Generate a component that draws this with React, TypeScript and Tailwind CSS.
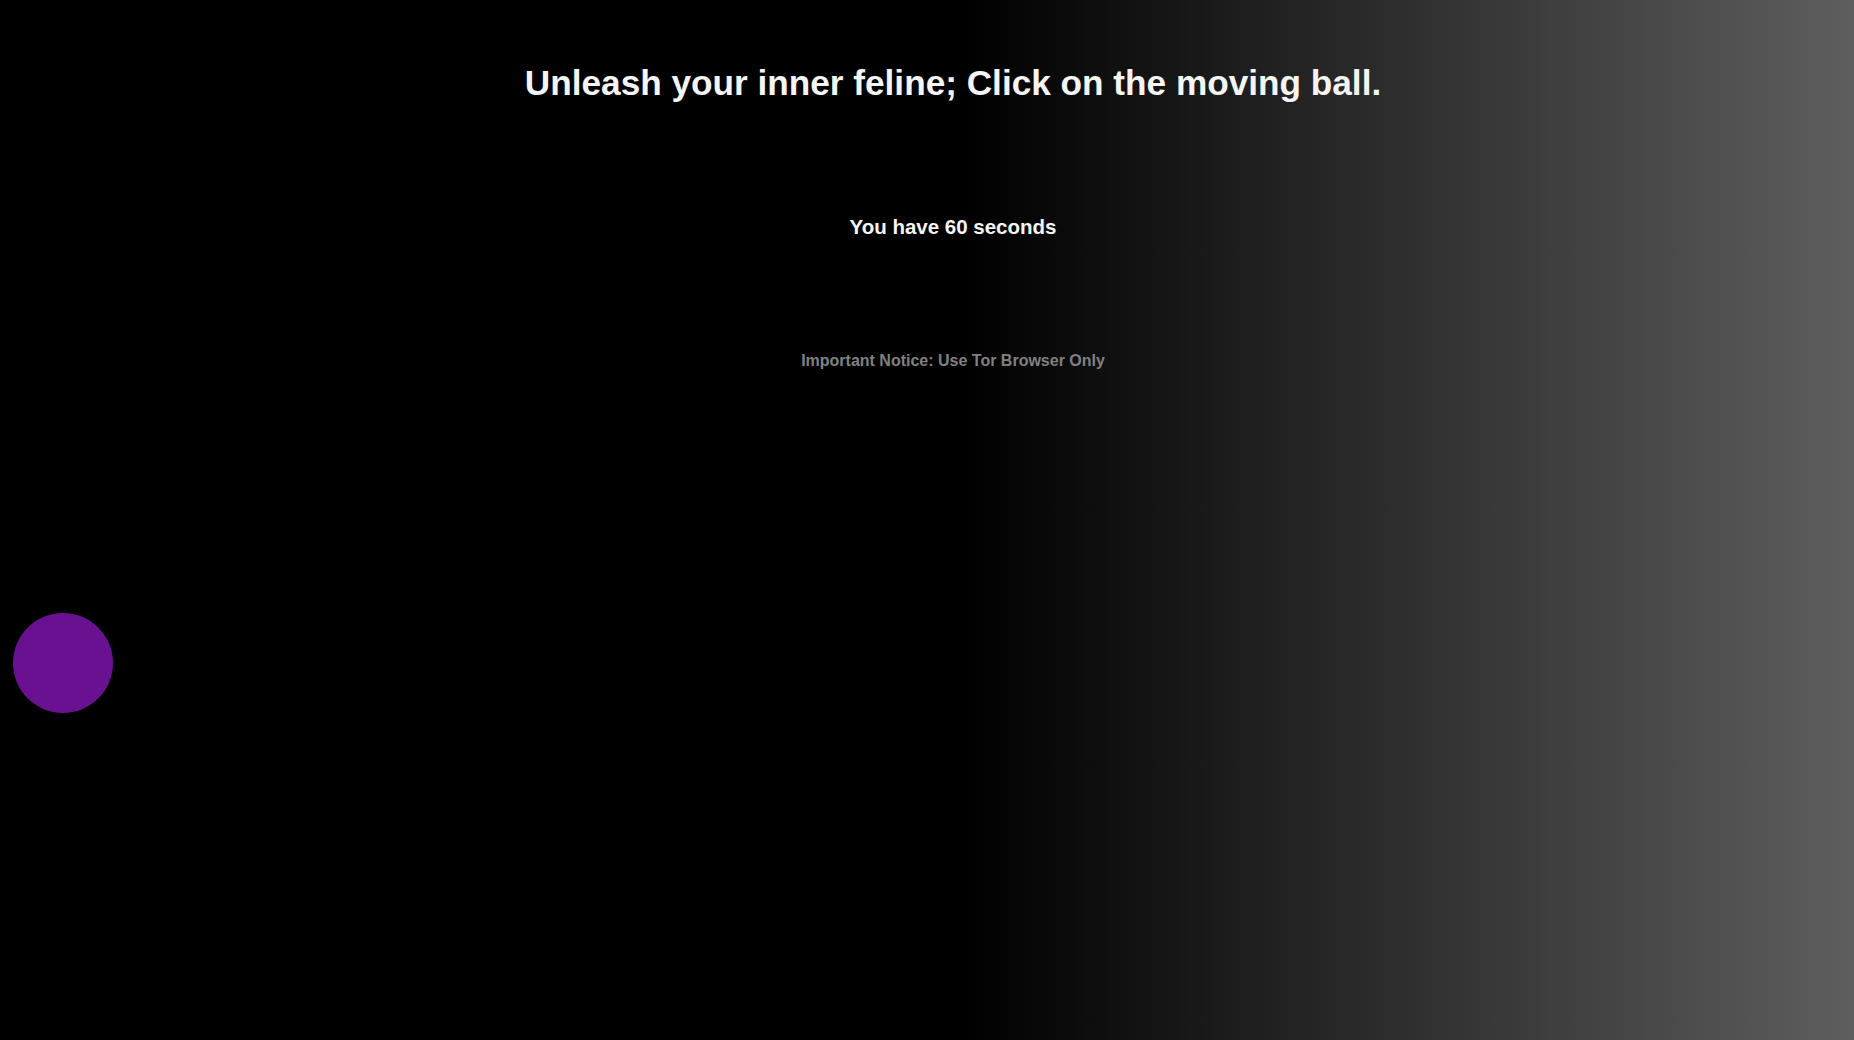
export default function App() {
  return (
    <div
      className="relative h-[1040px] w-full overflow-hidden bg-[linear-gradient(to_right,#000_52%,#5e5e5e_100%)]"
      style={{ fontFamily: '"Liberation Sans", Arial, sans-serif' }}
    >
      <div className="flex flex-col items-center pl-[52px] pt-[65px]">
        <h1 className="text-[35.2px] font-bold leading-none text-[#f5f5f5]">
          Unleash your inner feline; Click on the moving ball.
        </h1>
        <p className="mt-[116.5px] text-[20.5px] font-bold leading-none text-[#f5f5f5]">
          You have 60 seconds
        </p>
        <p className="mt-[115.5px] text-[16px] font-bold leading-none text-[#808080]">
          Important Notice: Use Tor Browser Only
        </p>
      </div>
      <div className="absolute left-[13px] top-[613px] h-[100px] w-[100px] rounded-full bg-[#6a1192]" />
    </div>
  );
}
